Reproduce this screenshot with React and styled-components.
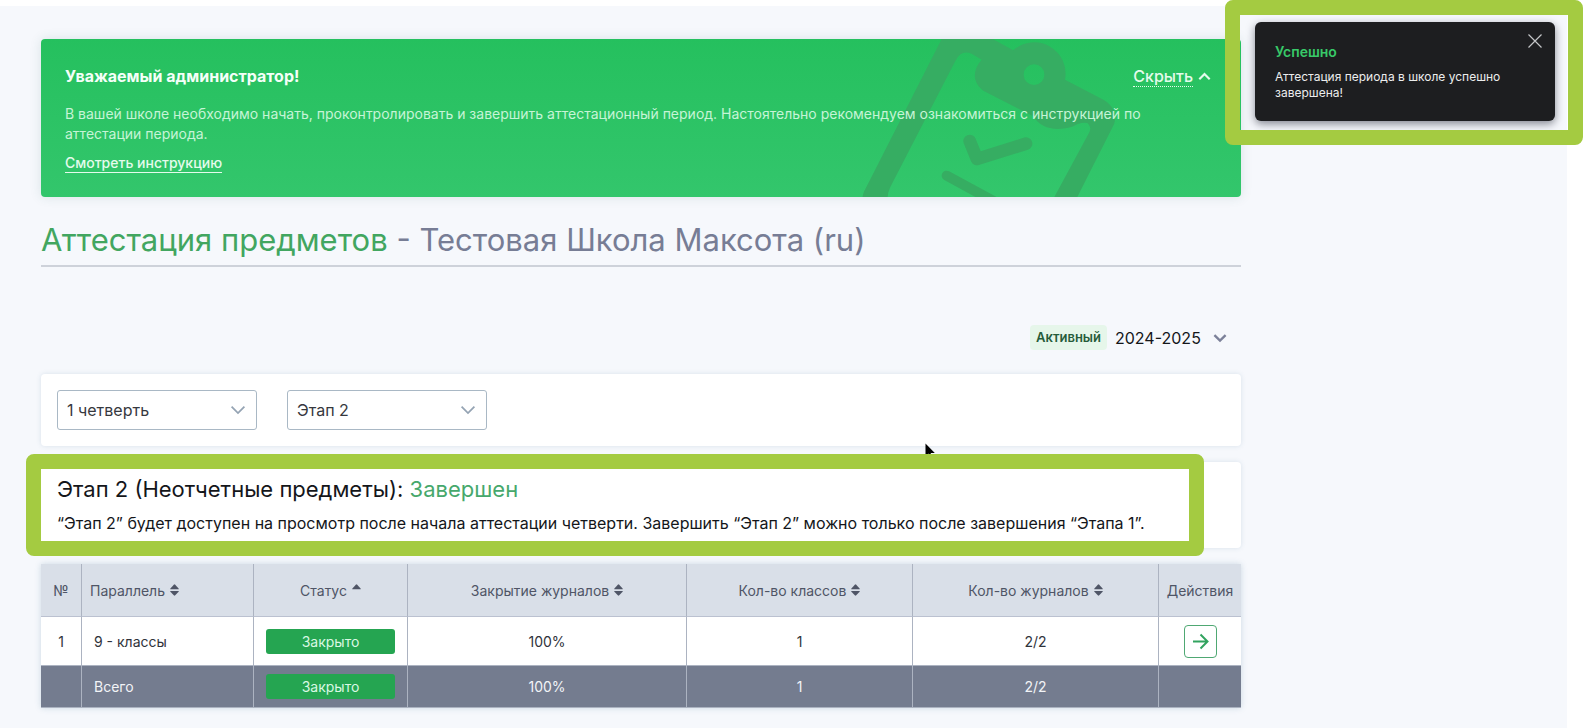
import React, { useState } from "react";
import styled, { createGlobalStyle } from "styled-components";

const columns = [
  { key: "parallel", title: "Параллель", sort: "both", width: 172 },
  { key: "status", title: "Статус", sort: "asc", width: 154 },
  { key: "closing", title: "Закрытие журналов", sort: "both", width: 279 },
  { key: "classes", title: "Кол-во классов", sort: "both", width: 226 },
  { key: "journals", title: "Кол-во журналов", sort: "both", width: 246 },
];

const rows = [
  {
    id: 1,
    parallel: "9 - классы",
    status: "Закрыто",
    closing: "100%",
    classes: "1",
    journals: "2/2",
  },
];

const total = {
  parallel: "Всего",
  status: "Закрыто",
  closing: "100%",
  classes: "1",
  journals: "2/2",
};

function Chevron({ up, width = 12, stroke = 2 }) {
  return (
    <svg width={width} height={width} viewBox="0 0 12 12" fill="none" aria-hidden="true">
      <path
        d={up ? "M1.2 8.5 6 3.7l4.8 4.8" : "M1.2 3.5 6 8.3l4.8-4.8"}
        stroke="currentColor"
        strokeWidth={stroke}
      />
    </svg>
  );
}

function SortIcon({ type }) {
  return (
    <svg width="9" height="12" viewBox="0 0 9 12" fill="currentColor" aria-hidden="true">
      <path d="M.4 5.3Q0 5 .4 4.4L3.8.7q.7-.7 1.4 0l3.4 3.7q.4.6 0 .9z" />
      {type === "both" && <path d="M.4 6.9Q0 7.2.4 7.8l3.4 3.5q.7.7 1.4 0l3.4-3.5q.4-.6 0-.9z" />}
    </svg>
  );
}

function Clipboard() {
  return (
    <ClipboardArt viewBox="60 118 780 474" aria-hidden="true">
      <path
        fillRule="evenodd"
        d="M68 592Q68 582 78 564L305 118H458L520 152A94 94 0 0 1 675 240L786 298C820 316 832 344 822 374L712 592H643L748 398Q756 380 742 370Q720 366 700 380C650 396 602 388 580 350L430 273C398 250 396 212 425 180L396 163Q364 148 346 184L151 562Q143 580 143 592ZM613 225A31 31 0 1 0 551 225A31 31 0 1 0 613 225Z"
      />
      <path
        d="M389 424L411 478L558 432"
        fill="none"
        stroke="currentColor"
        strokeWidth="38"
        strokeLinecap="round"
        strokeLinejoin="round"
      />
      <path d="M320 528L460 604" stroke="currentColor" strokeWidth="30" strokeLinecap="round" />
    </ClipboardArt>
  );
}

function Banner() {
  const [open, setOpen] = useState(true);

  return (
    <BannerBox>
      <Clipboard />
      <BannerHead>
        <BannerTitle>Уважаемый администратор!</BannerTitle>
        <HideButton type="button" onClick={() => setOpen(!open)}>
          <span>{open ? "Скрыть" : "Показать"}</span>
          <Chevron up={open} width={13} />
        </HideButton>
      </BannerHead>
      {open && (
        <>
          <BannerText>
            В вашей школе необходимо начать, проконтролировать и завершить аттестационный период.
            Настоятельно рекомендуем ознакомиться с инструкцией по аттестации периода.
          </BannerText>
          <BannerLink href="#instruction">Смотреть инструкцию</BannerLink>
        </>
      )}
    </BannerBox>
  );
}

function Dropdown({ label, options }) {
  return (
    <SelectWrap>
      <Select aria-label={label}>
        {options.map((option) => (
          <option key={option}>{option}</option>
        ))}
      </Select>
      <Chevron width={16} stroke={1.3} />
    </SelectWrap>
  );
}

function Toast() {
  const [visible, setVisible] = useState(true);

  if (!visible) return null;

  return (
    <ToastBox role="status">
      <ToastTitle>Успешно</ToastTitle>
      <ToastText>Аттестация периода в школе успешно завершена!</ToastText>
      <CloseButton type="button" aria-label="Закрыть" onClick={() => setVisible(false)}>
        <svg width="14" height="14" viewBox="0 0 14 14" stroke="currentColor" aria-hidden="true">
          <path d="M.5.5l13 13M13.5.5l-13 13" strokeWidth="1.2" />
        </svg>
      </CloseButton>
    </ToastBox>
  );
}

function Cells({ row }) {
  return (
    <>
      <Cell $left>{row.parallel}</Cell>
      <Cell>
        <Status>{row.status}</Status>
      </Cell>
      <Cell>{row.closing}</Cell>
      <Cell>{row.classes}</Cell>
      <Cell>{row.journals}</Cell>
    </>
  );
}

function App() {
  return (
    <Page>
      <GlobalStyle />
      <Main>
        <Banner />
        <Heading>
          <em>Аттестация предметов</em> - Тестовая Школа Максота (ru)
        </Heading>
        <YearBar>
          <Badge>Активный</Badge>
          <YearWrap>
            <YearSelect aria-label="Учебный год">
              <option>2024-2025</option>
            </YearSelect>
            <Chevron width={14} />
          </YearWrap>
        </YearBar>
        <Filters>
          <Dropdown label="Четверть" options={["1 четверть", "2 четверть"]} />
          <Dropdown label="Этап" options={["Этап 2", "Этап 1"]} />
        </Filters>
        <Stage>
          <StageTitle>
            Этап 2 (Неотчетные предметы): <span>Завершен</span>
          </StageTitle>
          <StageText>
            “Этап 2” будет доступен на просмотр после начала аттестации четверти. Завершить “Этап
            2” можно только после завершения “Этапа 1”.
          </StageText>
          <StageMarker />
        </Stage>
        <Table>
          <colgroup>
            <Col $width={41} />
            {columns.map((column) => (
              <Col key={column.key} $width={column.width} />
            ))}
            <Col $width={82} />
          </colgroup>
          <thead>
            <tr>
              <HeadCell>№</HeadCell>
              {columns.map((column) => (
                <HeadCell key={column.key} $left={column.key === "parallel"}>
                  <SortButton type="button">
                    {column.title}
                    <SortIcon type={column.sort} />
                  </SortButton>
                </HeadCell>
              ))}
              <HeadCell>Действия</HeadCell>
            </tr>
          </thead>
          <tbody>
            {rows.map((row) => (
              <Row key={row.id}>
                <Cell>{row.id}</Cell>
                <Cells row={row} />
                <Cell>
                  <OpenButton type="button" aria-label="Открыть">
                    <svg width="17" height="17" viewBox="0 0 17 17" fill="none" aria-hidden="true">
                      <path d="M1 8.5h14M8.5 1.5l7 7-7 7" stroke="currentColor" strokeWidth="2" />
                    </svg>
                  </OpenButton>
                </Cell>
              </Row>
            ))}
          </tbody>
          <tfoot>
            <TotalRow>
              <Cell />
              <Cells row={total} />
              <Cell />
            </TotalRow>
          </tfoot>
        </Table>
      </Main>
      <Cursor viewBox="0 0 10 15" aria-hidden="true">
        <path d="M.5.5v13l3-3 2 4.4 2-1-2-4h4.3z" />
      </Cursor>
      <ToastMarker>
        <Toast />
      </ToastMarker>
    </Page>
  );
}

export default App;

const GlobalStyle = createGlobalStyle`
  * {
    box-sizing: border-box;
  }

  body {
    margin: 0;
    background: #fff;
    font-family: Inter, "Noto Sans", sans-serif;
    color: #14161a;
  }

  button,
  select {
    font: inherit;
    color: inherit;
  }
`;

const Page = styled.div`
  position: relative;
  margin: 6px 16px 0 0;
  padding: 33px 326px 0 41px;
  min-height: calc(100vh - 6px);
  background: #f6f8fc;
`;

const Main = styled.main`
  display: flex;
  flex-direction: column;
`;

const BannerBox = styled.section`
  position: relative;
  padding: 25px 30px 24px 24px;
  border-radius: 4px;
  overflow: hidden;
  background: linear-gradient(#25c05e, #33c66c);
  box-shadow: 0 0 12px rgba(40, 100, 90, 0.14);
  color: #e4fbec;
`;

const ClipboardArt = styled.svg`
  position: absolute;
  top: 0;
  right: 121px;
  width: 260px;
  height: 158px;
  color: #36ad62;
  fill: currentColor;
`;

const BannerHead = styled.div`
  position: relative;
  display: flex;
  justify-content: space-between;
  align-items: center;
  height: 24px;
`;

const BannerTitle = styled.h2`
  margin: 0;
  font-size: 16px;
  font-weight: 700;
  color: #f4fff8;
`;

const HideButton = styled.button`
  display: flex;
  align-items: center;
  gap: 5px;
  padding: 0;
  border: 0;
  background: none;
  font-size: 16px;
  font-weight: 500;
  line-height: 20px;
  cursor: pointer;

  span {
    border-bottom: 1px dotted currentColor;
  }
`;

const BannerText = styled.p`
  position: relative;
  margin: 16px 0 8px;
  padding-right: 60px;
  font-size: 14px;
  line-height: 20px;
  color: #c6f4d6;
`;

const BannerLink = styled.a`
  position: relative;
  display: inline-block;
  border-bottom: 1px solid currentColor;
  font-size: 14px;
  font-weight: 500;
  line-height: 18px;
  color: inherit;
  text-decoration: none;
`;

const Heading = styled.h1`
  margin: 20px 0 0;
  padding-bottom: 2px;
  border-bottom: 2px solid #ced2da;
  font-size: 31px;
  font-weight: 400;
  line-height: 46px;
  color: #777d95;

  em {
    font-style: normal;
    color: #42a660;
  }
`;

const YearBar = styled.div`
  display: flex;
  justify-content: flex-end;
  align-items: center;
  gap: 8px;
  margin: 58px 14px 24px 0;
`;

const Badge = styled.span`
  padding: 0 6px;
  border-radius: 4px;
  background: #e6f6ea;
  font-size: 13px;
  font-weight: 600;
  line-height: 25px;
  color: #265c3a;
`;

const YearWrap = styled.div`
  position: relative;
  display: flex;
  align-items: center;

  svg {
    position: absolute;
    right: 0;
    color: #7c8199;
    pointer-events: none;
  }
`;

const YearSelect = styled.select`
  appearance: none;
  padding: 0 26px 0 0;
  border: 0;
  background: none;
  font-size: 16px;
  line-height: 24px;
`;

const Panel = styled.section`
  border-radius: 4px;
  background: #fff;
  box-shadow: 0 0 5px rgba(60, 110, 140, 0.16);
`;

const Filters = styled(Panel)`
  display: flex;
  gap: 30px;
  padding: 16px;
`;

const SelectWrap = styled.div`
  position: relative;
  display: flex;
  align-items: center;
  width: 200px;

  svg {
    position: absolute;
    right: 11px;
    color: #94a3b3;
    pointer-events: none;
  }
`;

const Select = styled.select`
  appearance: none;
  width: 100%;
  height: 40px;
  padding: 0 32px 0 9px;
  border: 1px solid #a9b8c5;
  border-radius: 3px;
  background: #fff;
  font-size: 16px;
  color: #36383e;
`;

const Stage = styled(Panel)`
  position: relative;
  margin-top: 16px;
  padding: 12px 16px;
`;

const StageTitle = styled.h2`
  margin: 0 0 6px;
  font-size: 22px;
  font-weight: 400;
  line-height: 30px;

  span {
    color: #46a86c;
  }
`;

const StageText = styled.p`
  margin: 0;
  font-size: 16px;
  line-height: 26px;
`;

// Marker frames lie over the page, they do not take part in the flow
const Marker = styled.div`
  position: absolute;
  border: 15px solid #a4cb41;
  border-radius: 8px;
`;

const StageMarker = styled(Marker)`
  top: -8px;
  right: 37px;
  bottom: -8px;
  left: -15px;
`;

const ToastMarker = styled(Marker)`
  top: -6px;
  right: -16px;
  width: 358px;
  padding: 7px 13px 9px 15px;
  overflow: hidden;
`;

const ToastBox = styled.div`
  position: relative;
  padding: 20px;
  border-radius: 6px;
  background: #1d1e20;
  box-shadow: 0 3px 9px rgba(20, 24, 40, 0.5);
`;

const ToastTitle = styled.h3`
  margin: 0 0 7px;
  font-size: 14px;
  font-weight: 600;
  line-height: 20px;
  color: #38c968;
`;

const ToastText = styled.p`
  margin: 0;
  font-size: 12px;
  line-height: 16px;
  color: #eceded;
`;

const CloseButton = styled.button`
  position: absolute;
  top: 12px;
  right: 13px;
  display: flex;
  padding: 0;
  border: 0;
  background: none;
  color: #c4c6c8;
  cursor: pointer;
`;

const Table = styled.table`
  width: 100%;
  margin-top: 16px;
  border-spacing: 0;
  table-layout: fixed;
  background: #fff;
  box-shadow: 0 0 6px rgba(60, 110, 140, 0.22);
  font-size: 14px;
`;

const Col = styled.col`
  width: ${({ $width }) => $width}px;
`;

const HeadCell = styled.th`
  height: 53px;
  padding: 0 ${({ $left }) => ($left ? 8 : 0)}px;
  border-right: 1px solid #acb3c1;
  border-bottom: 1px solid #bbc1d0;
  background: #d9dfe8;
  font-weight: 400;
  text-align: ${({ $left }) => ($left ? "left" : "center")};
  color: #4f5566;

  &:last-child {
    border-right: 0;
  }
`;

const SortButton = styled.button`
  display: inline-flex;
  align-items: center;
  gap: 5px;
  padding: 0;
  border: 0;
  background: none;
  cursor: pointer;
`;

const Cell = styled.td`
  padding: 0 12px;
  border-right: 1px solid #acb3c1;
  border-bottom: 1px solid #acb3c1;
  text-align: ${({ $left }) => ($left ? "left" : "center")};

  &:last-child {
    border-right: 0;
  }
`;

const Row = styled.tr`
  height: 49px;
  color: #30333b;
`;

const TotalRow = styled.tr`
  height: 42px;
  background: #747c8f;
  color: #f2f4f7;
`;

const Status = styled.span`
  display: block;
  border-radius: 3px;
  background: #25a551;
  line-height: 25px;
  color: #d9f8e3;
`;

const OpenButton = styled.button`
  display: inline-flex;
  justify-content: center;
  align-items: center;
  width: 33px;
  height: 33px;
  padding: 0;
  border: 1px solid #4fa873;
  border-radius: 4px;
  background: #fff;
  vertical-align: middle;
  color: #32a35f;
  cursor: pointer;
`;

// Stands between the filters and the stage marker
const Cursor = styled.svg`
  position: absolute;
  top: 437px;
  left: 925px;
  width: 10px;
  height: 15px;
  clip-path: inset(0 0 4px 0);
`;
